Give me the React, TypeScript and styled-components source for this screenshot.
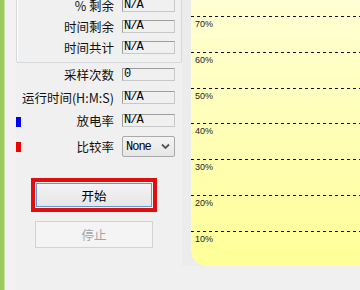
import React from 'react';
import styled, { createGlobalStyle } from 'styled-components';

const GlobalStyle = createGlobalStyle`
	html, body {
		margin: 0;
		padding: 0;
		background: #f0f0f0;
	}
	body {
		font-family: 'Noto Sans CJK SC', 'Noto Sans', sans-serif;
	}
`;

const groupFields = [
	{ label: '% 剩余', value: 'N/A' },
	{ label: '时间剩余', value: 'N/A' },
	{ label: '时间共计', value: 'N/A' },
];

const gridLabels = ['70%', '60%', '50%', '40%', '30%', '20%', '10%'];

const App = () => {
	return (
		<>
			<GlobalStyle />
			<Window>
				<GreenEdge />
				<Gutter />
				<Controls>
					<GroupBox>
						{groupFields.map((f) => (
							<GroupRow key={f.label}>
								<Label>{f.label}</Label>
								<ReadOnlyBox>{f.value}</ReadOnlyBox>
							</GroupRow>
						))}
					</GroupBox>
					<FieldRow>
						<Label>采样次数</Label>
						<ReadOnlyBox>0</ReadOnlyBox>
					</FieldRow>
					<FieldRow>
						<Label>运行时间(H:M:S)</Label>
						<ReadOnlyBox>N/A</ReadOnlyBox>
					</FieldRow>
					<FieldRow>
						<Marker $color="#0000f0" $offset={1} />
						<Label>放电率</Label>
						<ReadOnlyBox>N/A</ReadOnlyBox>
					</FieldRow>
					<SelectRow>
						<Marker $color="#f00000" $offset={0} />
						<Label>比较率</Label>
						<SelectBox>
							<span>None</span>
							<svg width="9" height="7" viewBox="0 0 9 7">
								<polyline
									points="1,1.5 4.5,5 8,1.5"
									fill="none"
									stroke="#555"
									strokeWidth="1.8"
								/>
							</svg>
						</SelectBox>
					</SelectRow>
					<FocusRing>
						<StartButton>开始</StartButton>
					</FocusRing>
					<StopButton disabled>停止</StopButton>
				</Controls>
				<ChartArea>
					<Plot>
						{gridLabels.map((l) => (
							<GridRow key={l}>
								<DashLine />
								<GridLabel>{l}</GridLabel>
							</GridRow>
						))}
					</Plot>
				</ChartArea>
			</Window>
		</>
	);
};

export default App;

const Window = styled.div`
	display: flex;
	width: 360px;
	height: 290px;
	overflow: hidden;
	background: #f0f0f0;
`;

const GreenEdge = styled.div`
	width: 4px;
	flex: none;
	background: #9cca5c;
	border-right: 1px solid #c6e1a2;
`;

const Gutter = styled.div`
	width: 11px;
	flex: none;
	background: #f3f1f1;
`;

const Controls = styled.div`
	width: 166px;
	flex: none;
	display: flex;
	flex-direction: column;
`;

const GroupBox = styled.div`
	margin-top: -6px;
	border: 1px solid #d5d9dc;
	box-shadow: inset 1px 1px 0 #ffffff;
	border-radius: 2px;
	padding: 0 6px 4px 0;
`;

const GroupRow = styled.div`
	display: flex;
	align-items: center;
	height: 21px;
`;

const FieldRow = styled.div`
	display: flex;
	align-items: center;
	height: 23px;
	padding-right: 7px;
	&:nth-of-type(1) {
		margin-top: 1px;
	}
`;

const SelectRow = styled.div`
	display: flex;
	align-items: center;
	height: 21px;
	margin-top: 4px;
	padding-right: 7px;
`;

const Marker = styled.div<{ $color: string; $offset: number }>`
	width: 5px;
	height: 10px;
	flex: none;
	margin-top: ${(p) => p.$offset * 3}px;
	background: ${(p) => p.$color};
`;

const Label = styled.div`
	flex: 1;
	text-align: right;
	font-size: 12.5px;
	line-height: 14px;
	color: #111;
	white-space: nowrap;
`;

const ReadOnlyBox = styled.div`
	box-sizing: border-box;
	width: 53px;
	height: 13px;
	margin-left: 8px;
	flex: none;
	padding-left: 1px;
	border: 1px solid #c8c8c8;
	border-top-color: #9d9d9d;
	border-left-color: #9d9d9d;
	background: #f0f0f0;
	font-family: 'Liberation Mono', monospace;
	font-size: 12px;
	letter-spacing: -1px;
	line-height: 11px;
	color: #000;
`;

const SelectBox = styled.div`
	box-sizing: border-box;
	width: 53px;
	height: 21px;
	margin-left: 8px;
	flex: none;
	display: flex;
	align-items: center;
	justify-content: space-between;
	padding: 0 4px 0 3px;
	border: 1px solid #a9a9a9;
	border-radius: 2px;
	background: linear-gradient(#f4f4f4, #e6e6e6);
	font-family: 'Liberation Mono', monospace;
	font-size: 12px;
	letter-spacing: -1px;
	color: #000;
`;

const FocusRing = styled.div`
	box-sizing: border-box;
	width: 126px;
	height: 34px;
	margin: 21px 0 0 15px;
	border: 4px solid #e00f0f;
	padding: 1px;
	background: #f0f0f0;
	display: flex;
`;

const StartButton = styled.button`
	flex: 1;
	margin: 0;
	padding: 0;
	border: 1px solid #5b9bd8;
	background: linear-gradient(#f3f3f3, #e6e6e6);
	font-family: 'Noto Sans CJK SC', sans-serif;
	font-size: 12.5px;
	color: #000;
`;

const StopButton = styled.button`
	box-sizing: border-box;
	width: 118px;
	height: 27px;
	margin: 9px 0 0 19px;
	padding: 0;
	border: 1px solid #d2d2d2;
	background: #f4f4f4;
	font-family: 'Noto Sans CJK SC', sans-serif;
	font-size: 12.5px;
	color: #a3a3a3;
`;

const ChartArea = styled.div`
	flex: 1;
	height: 266px;
	padding-left: 9px;
	background: #ececec;
	display: flex;
`;

const Plot = styled.div`
	flex: 1;
	padding-top: 16px;
	border-bottom-left-radius: 16px;
	background: linear-gradient(#fffed4, #ffff98);
	display: flex;
	flex-direction: column;
	overflow: hidden;
`;

const GridRow = styled.div`
	height: 35.8px;
	flex: none;
`;

const DashLine = styled.div`
	height: 1px;
	background: repeating-linear-gradient(to right, #111 0 3px, transparent 3px 6px);
`;

const GridLabel = styled.div`
	margin: 2px 0 0 4px;
	font-family: 'Liberation Sans', Arial, sans-serif;
	font-size: 9px;
	line-height: 10px;
	color: #222;
`;
